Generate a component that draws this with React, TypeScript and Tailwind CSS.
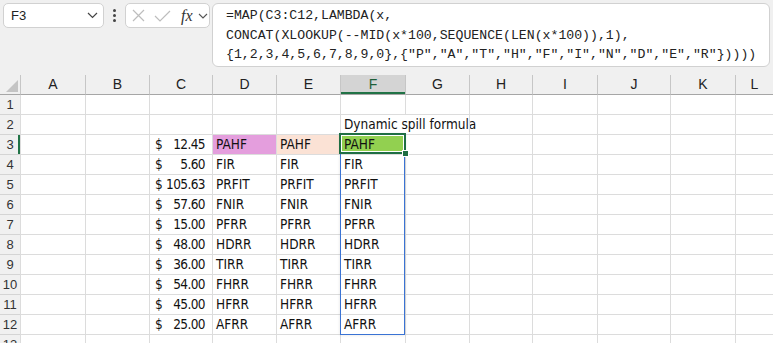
import React from "react";

const COLS = ["A", "B", "C", "D", "E", "F", "G", "H", "I", "J", "K", "L"];
const CV = ["12.45", "5.60", "105.63", "57.60", "15.00", "48.00", "36.00", "54.00", "45.00", "25.00"];
const DV = ["PAHF", "FIR", "PRFIT", "FNIR", "PFRR", "HDRR", "TIRR", "FHRR", "HFRR", "AFRR"];

const cellFont = { fontFamily: '"DejaVu Sans Condensed", "Liberation Sans Narrow", "Liberation Sans", sans-serif' };

function Cell({ children, className = "" }: { children?: React.ReactNode; className?: string }) {
  return (
    <div className={`border-l border-b border-[#dcdcdc] h-[20px] flex items-center overflow-visible whitespace-nowrap text-[13.5px] text-[#111] ${className}`}>
      {children}
    </div>
  );
}

export default function App() {
  const rows = Array.from({ length: 13 }, (_, i) => i + 1);
  return (
    <div className="w-[773px] h-[343px] overflow-hidden bg-white relative" style={{ fontFamily: '"Liberation Sans", Arial, sans-serif' }}>
      {/* Formula bar area */}
      <div className="h-[75px] bg-[#f0f0f0] flex items-start pt-[3px] pl-[3px]">
        <div className="w-[101px] h-[25px] rounded-[5px] border border-[#d1d1d1] bg-white flex items-center justify-between pl-[7px] pr-[5px]">
          <span className="text-[13px] text-[#222]">F3</span>
          <svg width="11" height="7" viewBox="0 0 11 7"><path d="M1 1 L5.5 5.5 L10 1" fill="none" stroke="#444" strokeWidth="1.2" /></svg>
        </div>
        <div className="w-[21px] h-[25px] flex flex-col items-center justify-center gap-[2px]">
          <div className="w-[3px] h-[3px] rounded-full bg-[#444]" />
          <div className="w-[3px] h-[3px] rounded-full bg-[#444]" />
          <div className="w-[3px] h-[3px] rounded-full bg-[#444]" />
        </div>
        <div className="w-[85px] h-[25px] rounded-[5px] border border-[#d1d1d1] bg-white flex items-center pl-[6px]">
          <svg width="13" height="13" viewBox="0 0 13 13"><path d="M1 1 L12 12 M12 1 L1 12" stroke="#bdbdbd" strokeWidth="1.2" fill="none" /></svg>
          <svg className="ml-[9px]" width="17" height="12" viewBox="0 0 17 12"><path d="M1 6 L6 11 L16 1" stroke="#bdbdbd" strokeWidth="1.2" fill="none" /></svg>
          <span className="ml-[10px] text-[16px] italic text-[#333] leading-none" style={{ fontFamily: '"Liberation Serif", "DejaVu Serif", serif' }}>fx</span>
          <svg className="ml-[5px]" width="10" height="6" viewBox="0 0 10 6"><path d="M1 1 L5 5 L9 1" fill="none" stroke="#555" strokeWidth="1.1" /></svg>
        </div>
        <div className="ml-[2px] w-[558px] h-[64px] rounded-[6px] border border-[#d1d1d1] bg-white pl-[13px] pt-[2px]">
          <div className="text-[13.2px] leading-[19.5px] text-[#222] whitespace-pre" style={{ fontFamily: '"Liberation Mono", "DejaVu Sans Mono", monospace' }}>
            <div>=MAP(C3:C12,LAMBDA(x,</div>
            <div>CONCAT(XLOOKUP(--MID(x*100,SEQUENCE(LEN(x*100)),1),</div>
            <div>{'{1,2,3,4,5,6,7,8,9,0},{"P","A","T","H","F","I","N","D","E","R"}))))'}</div>
          </div>
        </div>
      </div>

      {/* Sheet grid */}
      <div className="relative grid grid-cols-[20px_65px_64px_63px_64px_64px_65px_64px_63px_65px_73px_65px_38px] auto-rows-[20px]">
        {/* header row */}
        <div className="bg-[#f0f0f0] border-b border-[#a6a6a6] relative">
          <svg className="absolute right-[2px] bottom-[2px]" width="12" height="12" viewBox="0 0 12 12"><polygon points="12,0 12,12 0,12" fill="#c4c4c4" /></svg>
        </div>
        {COLS.map((c) =>
          c === "F" ? (
            <div key={c} className="bg-[#d4d4d4] border-l border-[#c6c6c6] border-b border-b-[#a6a6a6] shadow-[inset_0_-2px_0_#217346] flex items-center justify-center text-[14px] text-[#1d5e38]">
              {c}
            </div>
          ) : (
            <div key={c} className="bg-[#f0f0f0] border-l border-[#c6c6c6] border-b border-b-[#a6a6a6] flex items-center justify-center text-[14px] text-[#222]">
              {c}
            </div>
          )
        )}
        {rows.map((r) => {
          const idx = r - 3;
          const has = idx >= 0 && idx < 10;
          return (
            <React.Fragment key={r}>
              <div
                className={`bg-[#f0f0f0] border-b border-[#d4d4d4] flex items-center justify-center text-[13px] text-[#333] ${r === 3 ? "shadow-[inset_-2px_0_0_#217346]" : ""}`}
              >
                {r}
              </div>
              <Cell />
              <Cell />
              <Cell className="justify-between pl-[5px] pr-[7px]">
                {has ? (
                  <>
                    <span style={cellFont}>$</span>
                    <span className="tracking-[-0.6px]" style={cellFont}>{CV[idx]}</span>
                  </>
                ) : null}
              </Cell>
              <Cell className={`pl-[3px] ${r === 3 ? "bg-[#e49edd]" : ""}`}>
                {has ? <span style={cellFont}>{DV[idx]}</span> : null}
              </Cell>
              <Cell className={`pl-[3px] ${r === 3 ? "bg-[#fbe2d5]" : ""}`}>
                {has ? <span style={cellFont}>{DV[idx]}</span> : null}
              </Cell>
              <Cell className={`pl-[3px] ${r === 3 ? "bg-[#92d050]" : ""}`}>
                {has ? <span style={cellFont}>{DV[idx]}</span> : null}
                {r === 2 ? <span style={cellFont}>Dynamic spill formula</span> : null}
              </Cell>
              <Cell className={r === 2 ? "border-l-transparent" : ""} />
              <Cell />
              <Cell />
              <Cell />
              <Cell />
              <Cell />
            </React.Fragment>
          );
        })}

        {/* spill range border */}
        <div className="absolute left-[340px] top-[59px] w-[65px] h-[201px] border border-[#3a73d4] shadow-[0_0_3px_rgba(0,0,0,0.12)] pointer-events-none" />
        {/* active cell border */}
        <div className="absolute left-[339px] top-[58px] w-[67px] h-[21px] border-2 border-[#1f6e43] shadow-[inset_0_0_0_1px_#ffffff] pointer-events-none" />
        {/* fill handle */}
        <div className="absolute left-[402px] top-[75px] w-[7px] h-[7px] bg-[#1f6e43] border border-white" />
      </div>
    </div>
  );
}
